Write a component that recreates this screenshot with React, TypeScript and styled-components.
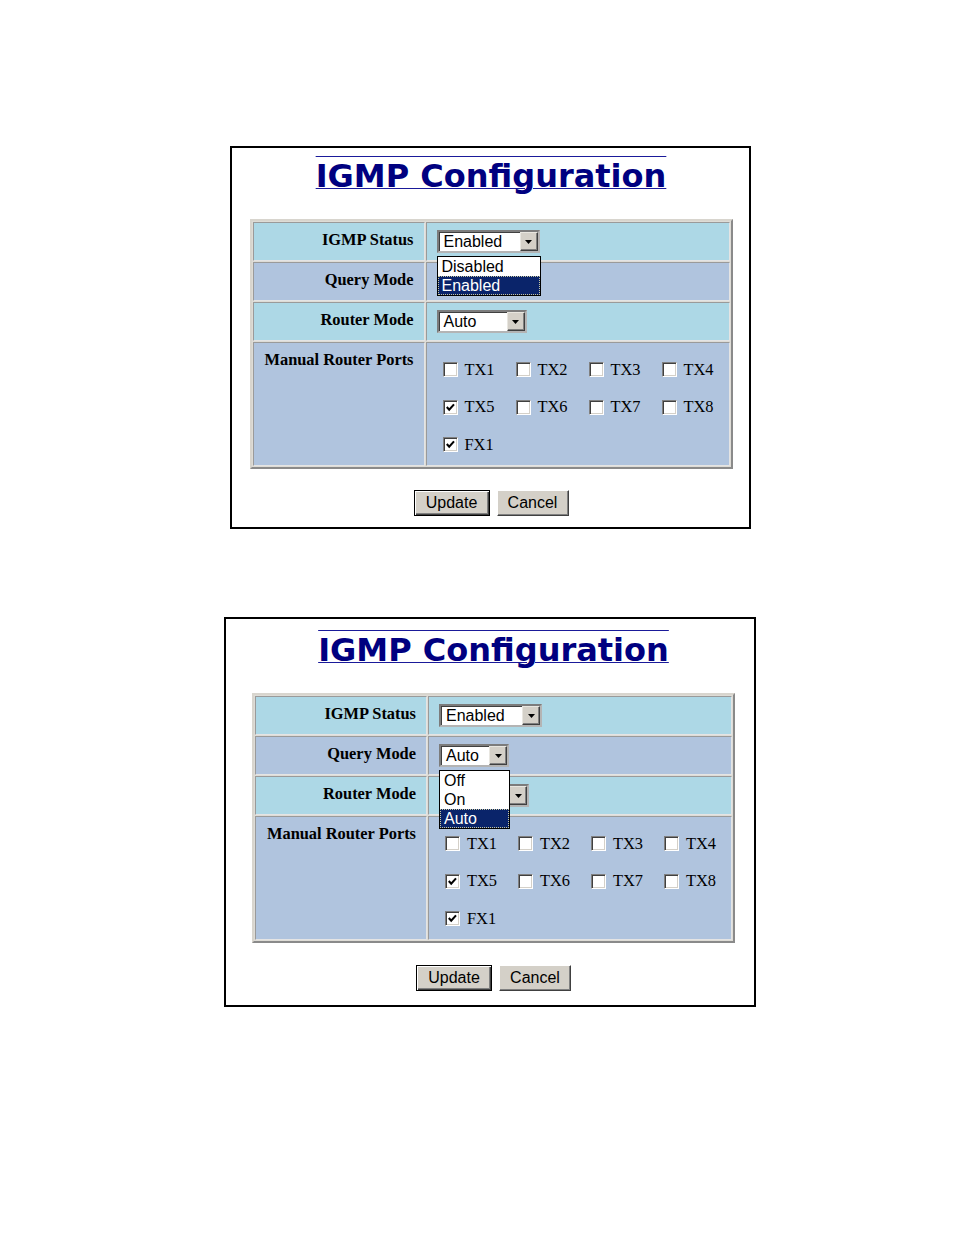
import styled, { createGlobalStyle } from "styled-components";

const GlobalStyle = createGlobalStyle`
    html, body {
        margin: 0;
        padding: 0;
        background: #ffffff;
    }
`;

const Page = styled.div`
    display: flex;
    flex-direction: column;
    align-items: flex-start;
    padding-top: 146px;
    gap: 88px;
`;

const Panel = styled.div<{ $left: number; $width: number; $top: number; $bottom: number; $pad: number; $btnGap: number }>`
    display: flex;
    flex-direction: column;
    align-items: center;
    box-sizing: border-box;
    margin-left: ${({ $left }) => $left}px;
    width: ${({ $width }) => $width}px;
    border: 2px solid #000000;
    padding: ${({ $top }) => $top}px 0 ${({ $bottom }) => $bottom}px ${({ $pad }) => $pad}px;
    & > table {
        margin-top: 24px;
    }
    & > div:last-child {
        margin-top: ${({ $btnGap }) => $btnGap}px;
    }
`;

const Title = styled.h1`
    margin: 0;
    font: bold 32px/38px "DejaVu Sans", Verdana, sans-serif;
    color: #000080;
    text-decoration: underline overline;
    text-decoration-color: #1a1a9a;
    text-decoration-thickness: 1px;
    white-space: nowrap;
`;

const ConfigTable = styled.table`
    width: 483px;
    table-layout: fixed;
    border-collapse: separate;
    border-spacing: 1px;
    border: 2px solid;
    border-color: #d8d5ce #8a8a8a #8a8a8a #d8d5ce;
    background: #dedcd6;
`;

const Row = styled.tr<{ $tall?: boolean }>`
    height: ${({ $tall }) => ($tall ? 124 : 39)}px;
`;

const LabelCell = styled.td<{ $alt?: boolean }>`
    box-sizing: border-box;
    width: 172px;
    padding: 0 10px 0 0;
    vertical-align: top;
    text-align: right;
    font: bold 16.4px/33px "Liberation Serif", "Times New Roman", serif;
    color: #000000;
    white-space: nowrap;
    background: ${({ $alt }) => ($alt ? "#b0c4de" : "#add8e6")};
    border: 1px solid;
    border-color: #9a9a9a #e4e4e4 #e4e4e4 #9a9a9a;
`;

const ValueCell = styled.td<{ $alt?: boolean; $top?: boolean }>`
    box-sizing: border-box;
    padding: ${({ $top }) => ($top ? "8px 0 0 16px" : "0 0 0 10px")};
    vertical-align: ${({ $top }) => ($top ? "top" : "middle")};
    background: ${({ $alt }) => ($alt ? "#b0c4de" : "#add8e6")};
    border: 1px solid;
    border-color: #9a9a9a #e4e4e4 #e4e4e4 #9a9a9a;
`;

const SelectWrap = styled.div`
    position: relative;
    display: flex;
    height: 23px;
    align-items: center;
`;

const SelectBox = styled.div<{ $width: number }>`
    box-sizing: border-box;
    display: flex;
    align-items: center;
    width: ${({ $width }) => $width}px;
    height: 23px;
    background: #ffffff;
    border: 2px solid;
    border-color: #7c7c7c #b4b4b4 #b4b4b4 #7c7c7c;
    box-shadow: inset 1px 1px 0 #404040;
    padding: 0 0 0 5px;
`;

const SelectText = styled.span<{ $covered?: boolean }>`
    flex: 1;
    font: 16px/17px "Liberation Sans", Arial, sans-serif;
    color: #000000;
    white-space: nowrap;
    visibility: ${({ $covered }) => ($covered ? "hidden" : "visible")};
`;

const ArrowButton = styled.span`
    box-sizing: border-box;
    display: flex;
    flex-shrink: 0;
    align-items: center;
    justify-content: center;
    width: 18px;
    height: 19px;
    background: #d4d0c8;
    border: 1px solid;
    border-color: #e8e6e0 #404040 #404040 #e8e6e0;
    box-shadow: inset -1px -1px 0 #808080;
`;

const DropList = styled.ul<{ $width: number }>`
    position: absolute;
    z-index: 2;
    top: 26px;
    left: 0;
    box-sizing: border-box;
    width: ${({ $width }) => $width}px;
    margin: 0;
    padding: 0;
    list-style: none;
    background: #ffffff;
    border: 1px solid #000000;
`;

const Option = styled.li<{ $active?: boolean }>`
    box-sizing: border-box;
    height: 19px;
    padding-left: 3px;
    font: 16px/18px "Liberation Sans", Arial, sans-serif;
    color: ${({ $active }) => ($active ? "#ffffff" : "#000000")};
    background: ${({ $active }) => ($active ? "#0a246a" : "#ffffff")};
    border: 1px dotted ${({ $active }) => ($active ? "#c8c8a0" : "transparent")};
    white-space: nowrap;
`;

const PortGrid = styled.div`
    display: grid;
    grid-template-columns: repeat(4, 73px);
    grid-auto-rows: 37.5px;
    align-items: center;
`;

const Port = styled.label`
    display: flex;
    align-items: center;
    gap: 7px;
    font: 16.4px "Liberation Serif", "Times New Roman", serif;
    color: #000000;
`;

const CheckBox = styled.span`
    box-sizing: border-box;
    display: flex;
    flex-shrink: 0;
    align-items: center;
    justify-content: center;
    width: 15px;
    height: 15px;
    background: #ffffff;
    border: 1px solid;
    border-color: #808080 #ffffff #ffffff #808080;
    box-shadow: inset 1px 1px 0 #404040, inset -1px -1px 0 #d4d0c8;
`;

const ButtonRow = styled.div`
    display: flex;
    gap: 7px;
`;

const Button = styled.button<{ $width: number; $default?: boolean }>`
    box-sizing: border-box;
    width: ${({ $width }) => $width}px;
    height: 26px;
    padding: 0;
    font: 16px "Liberation Sans", Arial, sans-serif;
    color: #000000;
    background: #d4d0c8;
    border: 1px solid;
    border-color: ${({ $default }) => ($default ? "#000000" : "#ffffff #404040 #404040 #ffffff")};
    box-shadow: ${({ $default }) =>
        $default
            ? "inset 1px 1px 0 #ffffff, inset -1px -1px 0 #404040, inset -2px -2px 0 #808080"
            : "inset -1px -1px 0 #808080"};
`;

function Arrow() {
    return (
        <svg width="7" height="4" viewBox="0 0 7 4">
            <path d="M0 0 H7 L3.5 4 Z" fill="#000000" />
        </svg>
    );
}

function Check() {
    return (
        <svg width="11" height="11" viewBox="0 0 11 11">
            <polyline points="1.8,5 4.2,7.6 9,2.4" fill="none" stroke="#000000" strokeWidth="2.1" />
        </svg>
    );
}

type Menu = { width: number; options: string[]; active: string };

function Select({ width, value, menu, covered }: { width: number; value: string; menu?: Menu; covered?: boolean }) {
    return (
        <SelectWrap>
            <SelectBox $width={width}>
                <SelectText $covered={covered}>{value}</SelectText>
                <ArrowButton><Arrow /></ArrowButton>
            </SelectBox>
            {menu && (
                <DropList $width={menu.width}>
                    {menu.options.map((o) => (
                        <Option key={o} $active={o === menu.active}>{o}</Option>
                    ))}
                </DropList>
            )}
        </SelectWrap>
    );
}

const ports = ["TX1", "TX2", "TX3", "TX4", "TX5", "TX6", "TX7", "TX8", "FX1"];
const checked = ["TX5", "FX1"];

type PanelProps = {
    left: number;
    width: number;
    top: number;
    bottom: number;
    pad: number;
    btnGap: number;
    statusMenu?: Menu;
    queryMenu?: Menu;
};

function ConfigPanel(p: PanelProps) {
    return (
        <Panel $left={p.left} $width={p.width} $top={p.top} $bottom={p.bottom} $pad={p.pad} $btnGap={p.btnGap}>
            <Title>IGMP Configuration</Title>
            <ConfigTable>
                <tbody>
                    <Row>
                        <LabelCell>IGMP Status</LabelCell>
                        <ValueCell><Select width={103} value="Enabled" menu={p.statusMenu} /></ValueCell>
                    </Row>
                    <Row>
                        <LabelCell $alt>Query Mode</LabelCell>
                        <ValueCell $alt>
                            <Select width={70} value="Auto" menu={p.queryMenu} covered={!!p.statusMenu} />
                        </ValueCell>
                    </Row>
                    <Row>
                        <LabelCell>Router Mode</LabelCell>
                        <ValueCell><Select width={90} value="Auto" covered={!!p.queryMenu} /></ValueCell>
                    </Row>
                    <Row $tall>
                        <LabelCell $alt>Manual Router Ports</LabelCell>
                        <ValueCell $alt $top>
                            <PortGrid>
                                {ports.map((port) => (
                                    <Port key={port}>
                                        <CheckBox>{checked.includes(port) && <Check />}</CheckBox>
                                        {port}
                                    </Port>
                                ))}
                            </PortGrid>
                        </ValueCell>
                    </Row>
                </tbody>
            </ConfigTable>
            <ButtonRow>
                <Button $width={76} $default>Update</Button>
                <Button $width={72}>Cancel</Button>
            </ButtonRow>
        </Panel>
    );
}

export default function App() {
    return (
        <>
            <GlobalStyle />
            <Page>
                <ConfigPanel
                    left={230} width={521} top={9} bottom={11} pad={1} btnGap={21}
                    statusMenu={{ width: 104, options: ["Disabled", "Enabled"], active: "Enabled" }}
                />
                <ConfigPanel
                    left={224} width={532} top={12} bottom={14} pad={7} btnGap={22}
                    queryMenu={{ width: 71, options: ["Off", "On", "Auto"], active: "Auto" }}
                />
            </Page>
        </>
    );
}
